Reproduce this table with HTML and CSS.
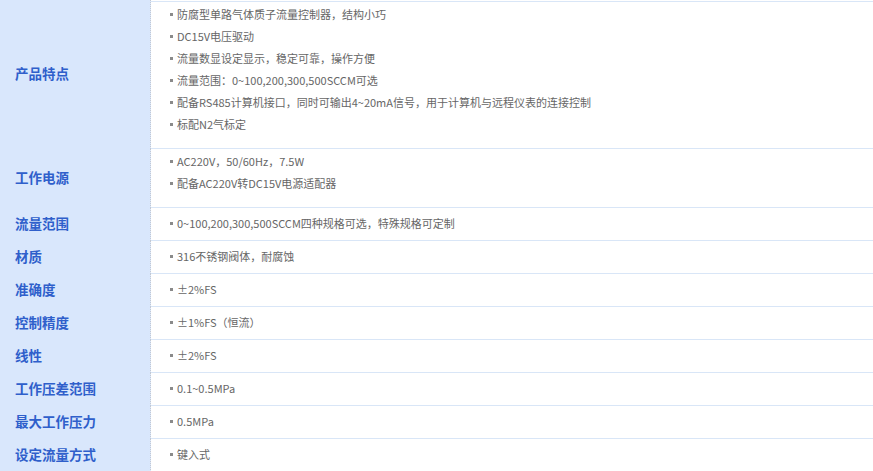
FILE: index.html
```html
<!DOCTYPE html>
<html lang="zh-CN">
<head>
<meta charset="utf-8">
<title>产品参数</title>
<link rel="stylesheet" href="styles.css">
</head>
<body>
<table class="spec">
  <tbody>
    <tr class="multi first">
      <th>产品特点</th>
      <td>
        <ul>
          <li>防腐型单路气体质子流量控制器，结构小巧</li>
          <li>DC15V电压驱动</li>
          <li>流量数显设定显示，稳定可靠，操作方便</li>
          <li>流量范围：0~100,200,300,500SCCM可选</li>
          <li>配备RS485计算机接口，同时可输出4~20mA信号，用于计算机与远程仪表的连接控制</li>
          <li>标配N2气标定</li>
        </ul>
      </td>
    </tr>
    <tr class="multi">
      <th>工作电源</th>
      <td>
        <ul>
          <li>AC220V，50/60Hz，7.5W</li>
          <li>配备AC220V转DC15V电源适配器</li>
        </ul>
      </td>
    </tr>
    <tr>
      <th>流量范围</th>
      <td><ul><li>0~100,200,300,500SCCM四种规格可选，特殊规格可定制</li></ul></td>
    </tr>
    <tr>
      <th>材质</th>
      <td><ul><li>316不锈钢阀体，耐腐蚀</li></ul></td>
    </tr>
    <tr>
      <th>准确度</th>
      <td><ul><li>±2%FS</li></ul></td>
    </tr>
    <tr>
      <th>控制精度</th>
      <td><ul><li>±1%FS（恒流）</li></ul></td>
    </tr>
    <tr>
      <th>线性</th>
      <td><ul><li>±2%FS</li></ul></td>
    </tr>
    <tr>
      <th>工作压差范围</th>
      <td><ul><li>0.1~0.5MPa</li></ul></td>
    </tr>
    <tr>
      <th>最大工作压力</th>
      <td><ul><li>0.5MPa</li></ul></td>
    </tr>
    <tr>
      <th>设定流量方式</th>
      <td><ul><li>键入式</li></ul></td>
    </tr>
  </tbody>
</table>
</body>
</html>
```

FILE: styles.css
```css
html, body {
  margin: 0;
  padding: 0;
  background: #ffffff;
}

.spec {
  width: 100%;
  border-collapse: separate;
  border-spacing: 0;
  table-layout: fixed;
}

.spec th {
  width: 135px;
  padding: 0 0 3px 15px;
  background: #d9e7fc;
  border-right: 1px dotted #c4c9d2;
  text-align: left;
  vertical-align: middle;
  font-family: "Noto Sans CJK SC", "Noto Sans", sans-serif;
  font-size: 13.5px;
  font-weight: bold;
  color: #2f5fcb;
  white-space: nowrap;
}

.spec td {
  padding: 4px 0 6px 19px;
  border-bottom: 1px solid #d9e6f7;
  vertical-align: middle;
  font-family: "Noto Sans CJK SC", "Noto Sans", sans-serif;
  font-size: 11px;
  color: #666666;
}

.spec tr.multi td {
  padding-top: 1px;
  padding-bottom: 13px;
}

.spec tr.first td {
  border-top: 1px solid #ffffff;
  box-shadow: inset 0 1px 0 #d9e6f7;
  padding-top: 2px;
}

.spec ul {
  list-style: none;
  margin: 0;
  padding: 0;
}

.spec li {
  line-height: 22px;
  height: 22px;
  display: flex;
  align-items: center;
  white-space: nowrap;
}

.spec li::before {
  content: "";
  width: 3px;
  height: 3px;
  background: #8a8a8a;
  margin-right: 4px;
  flex: none;
}
```
